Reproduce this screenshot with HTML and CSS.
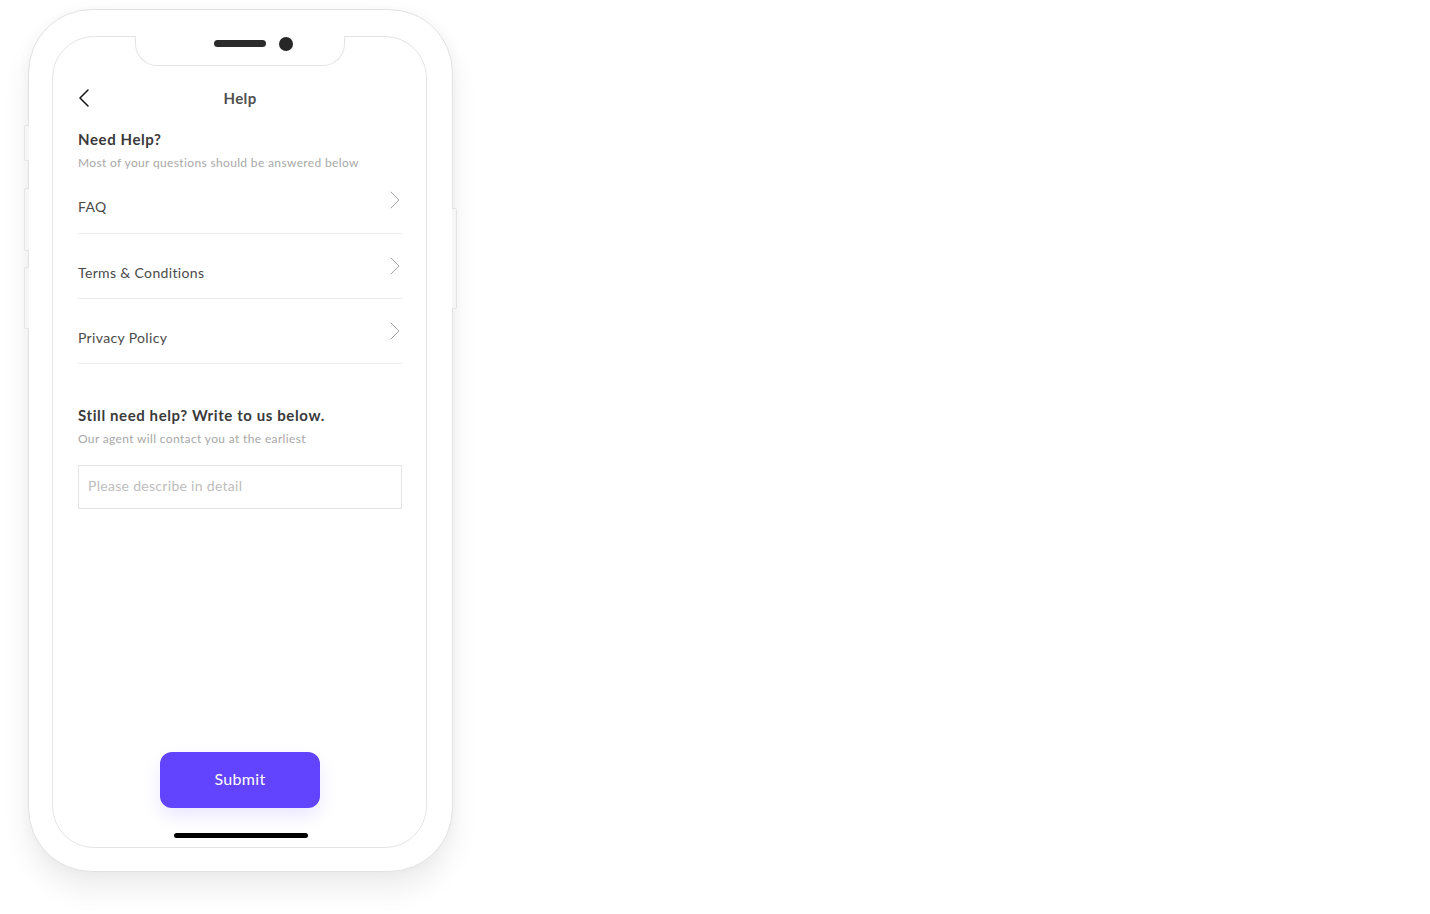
FILE: index.html
```html
<!DOCTYPE html>
<html lang="en">
<head>
<meta charset="utf-8">
<title>Help</title>
<link rel="stylesheet" href="styles.css">
</head>
<body>
<div class="stage">
  <div class="phone">
    <span class="side-btn btn-l1"></span>
    <span class="side-btn btn-l2"></span>
    <span class="side-btn btn-l3"></span>
    <span class="side-btn btn-r1"></span>
    <div class="screen">
      <div class="notch">
        <span class="speaker"></span>
        <span class="camera"></span>
      </div>
      <header class="topbar">
        <span class="back">
          <svg width="12" height="18" viewBox="0 0 12 18"><path d="M10 1 L2 9 L10 17" fill="none" stroke="#111" stroke-width="1.5" stroke-linecap="round" stroke-linejoin="round"/></svg>
        </span>
        <h1 class="topbar-title">Help</h1>
        <span class="back-spacer"></span>
      </header>

      <h2 class="section-title">Need Help?</h2>
      <p class="section-sub">Most of your questions should be answered below</p>

      <ul class="links">
        <li class="link-row"><span class="link-text">FAQ</span>
          <svg class="chev" width="12" height="18" viewBox="0 0 12 18"><path d="M2 1 L10 9 L2 17" fill="none" stroke="#a3a3a3" stroke-width="1" stroke-linecap="round" stroke-linejoin="round"/></svg></li>
        <li class="link-row"><span class="link-text">Terms &amp; Conditions</span>
          <svg class="chev" width="12" height="18" viewBox="0 0 12 18"><path d="M2 1 L10 9 L2 17" fill="none" stroke="#a3a3a3" stroke-width="1" stroke-linecap="round" stroke-linejoin="round"/></svg></li>
        <li class="link-row"><span class="link-text">Privacy Policy</span>
          <svg class="chev" width="12" height="18" viewBox="0 0 12 18"><path d="M2 1 L10 9 L2 17" fill="none" stroke="#a3a3a3" stroke-width="1" stroke-linecap="round" stroke-linejoin="round"/></svg></li>
      </ul>

      <h2 class="section-title second">Still need help? Write to us below.</h2>
      <p class="section-sub">Our agent will contact you at the earliest</p>

      <input class="detail-input" type="text" placeholder="Please describe in detail">

      <button class="submit" type="button">Submit</button>
      <div class="home-indicator"></div>
    </div>
  </div>
</div>
</body>
</html>
```

FILE: styles.css
```css
* { box-sizing: border-box; }
html, body { margin: 0; padding: 0; background: #ffffff; }
body {
  font-family: Lato, "Open Sans", "Liberation Sans", sans-serif;
  color: #4a4a4a;
  width: 1430px;
  height: 914px;
  overflow: hidden;
}
.stage {
  padding: 9px 0 0 28px;
}
.phone {
  position: relative;
  width: 425px;
  height: 863px;
  border: 1px solid #e2e2e2;
  border-radius: 64px;
  background: #ffffff;
  padding: 26px 25px 23px 23px;
  box-shadow: 0 18px 28px rgba(0, 0, 0, 0.07), 0 0 14px rgba(0, 0, 0, 0.035);
}
.side-btn {
  position: absolute;
  width: 5px;
  background: #f6f6f6;
  border: 1px solid #e4e4e4;
}
.btn-l1, .btn-l2, .btn-l3 { left: -5px; border-right: none; border-radius: 2px 0 0 2px; }
.btn-l1 { top: 115px; height: 36px; }
.btn-l2 { top: 178px; height: 63px; }
.btn-l3 { top: 257px; height: 62px; }
.btn-r1 { right: -5px; top: 198px; height: 101px; border-left: none; border-radius: 0 2px 2px 0; }

.screen {
  position: relative;
  width: 375px;
  height: 812px;
  border: 1px solid #e4e4e4;
  border-radius: 42px;
  padding: 39px 24px 9px 25px;
  display: flex;
  flex-direction: column;
}
.notch {
  position: absolute;
  top: -1px;
  left: 82px;
  width: 210px;
  height: 30px;
  background: #ffffff;
  border: 1px solid #e4e4e4;
  border-top: none;
  border-radius: 0 0 22px 22px;
}
.speaker {
  position: absolute;
  left: 78px;
  top: 4px;
  width: 52px;
  height: 7px;
  border-radius: 4px;
  background: #2b2b2b;
}
.camera {
  position: absolute;
  left: 143px;
  top: 1px;
  width: 14px;
  height: 14px;
  border-radius: 50%;
  background: #262626;
}

.topbar {
  height: 44px;
  display: flex;
  align-items: center;
  justify-content: space-between;
}
.back, .back-spacer {
  width: 24px;
  display: flex;
  align-items: center;
}
.topbar-title {
  margin: 0;
  font-size: 15px;
  font-weight: 700;
  color: #505050;
  letter-spacing: 0.4px;
}
.section-title {
  margin: 9px 0 0;
  font-size: 15px;
  line-height: 20px;
  font-weight: 700;
  color: #3a3a3a;
  letter-spacing: 0.6px;
}
.section-title.second { margin-top: 41px; }
.section-sub {
  margin: 8px 0 0;
  font-size: 12px;
  line-height: 12px;
  color: #a8a8a8;
  letter-spacing: 0.35px;
}
.links {
  list-style: none;
  margin: 0;
  padding: 0;
}
.link-row {
  display: flex;
  justify-content: space-between;
  align-items: flex-start;
  padding: 28px 0 16px;
  border-bottom: 1px solid #ececec;
}
.link-row + .link-row { padding-top: 29px; padding-bottom: 15px; }
.link-text {
  font-size: 14px;
  line-height: 20px;
  color: #4a4a4a;
  letter-spacing: 0.35px;
}
.chev {
  margin-top: -6px;
  margin-right: 1px;
}
.detail-input {
  margin-top: 20px;
  width: 100%;
  height: 44px;
  border: 1px solid #e4e4e4;
  border-radius: 0;
  padding: 0 9px 3px;
  font-family: inherit;
  font-size: 14px;
  color: #4a4a4a;
  letter-spacing: 0.3px;
  outline: none;
}
.detail-input::placeholder { color: #bdbdbd; }
.submit {
  margin: auto auto 0;
  width: 160px;
  height: 56px;
  border: none;
  border-radius: 12px;
  background: #6244ff;
  color: #ffffff;
  font-family: inherit;
  font-size: 16px;
  letter-spacing: 0.3px;
  padding: 0 0 4px;
  box-shadow: 0 8px 18px rgba(98, 68, 255, 0.13);
}
.home-indicator {
  margin: 25px auto 0;
  width: 134px;
  height: 5px;
  border-radius: 3px;
  background: #000000;
  position: relative;
  left: 1px;
}
```
